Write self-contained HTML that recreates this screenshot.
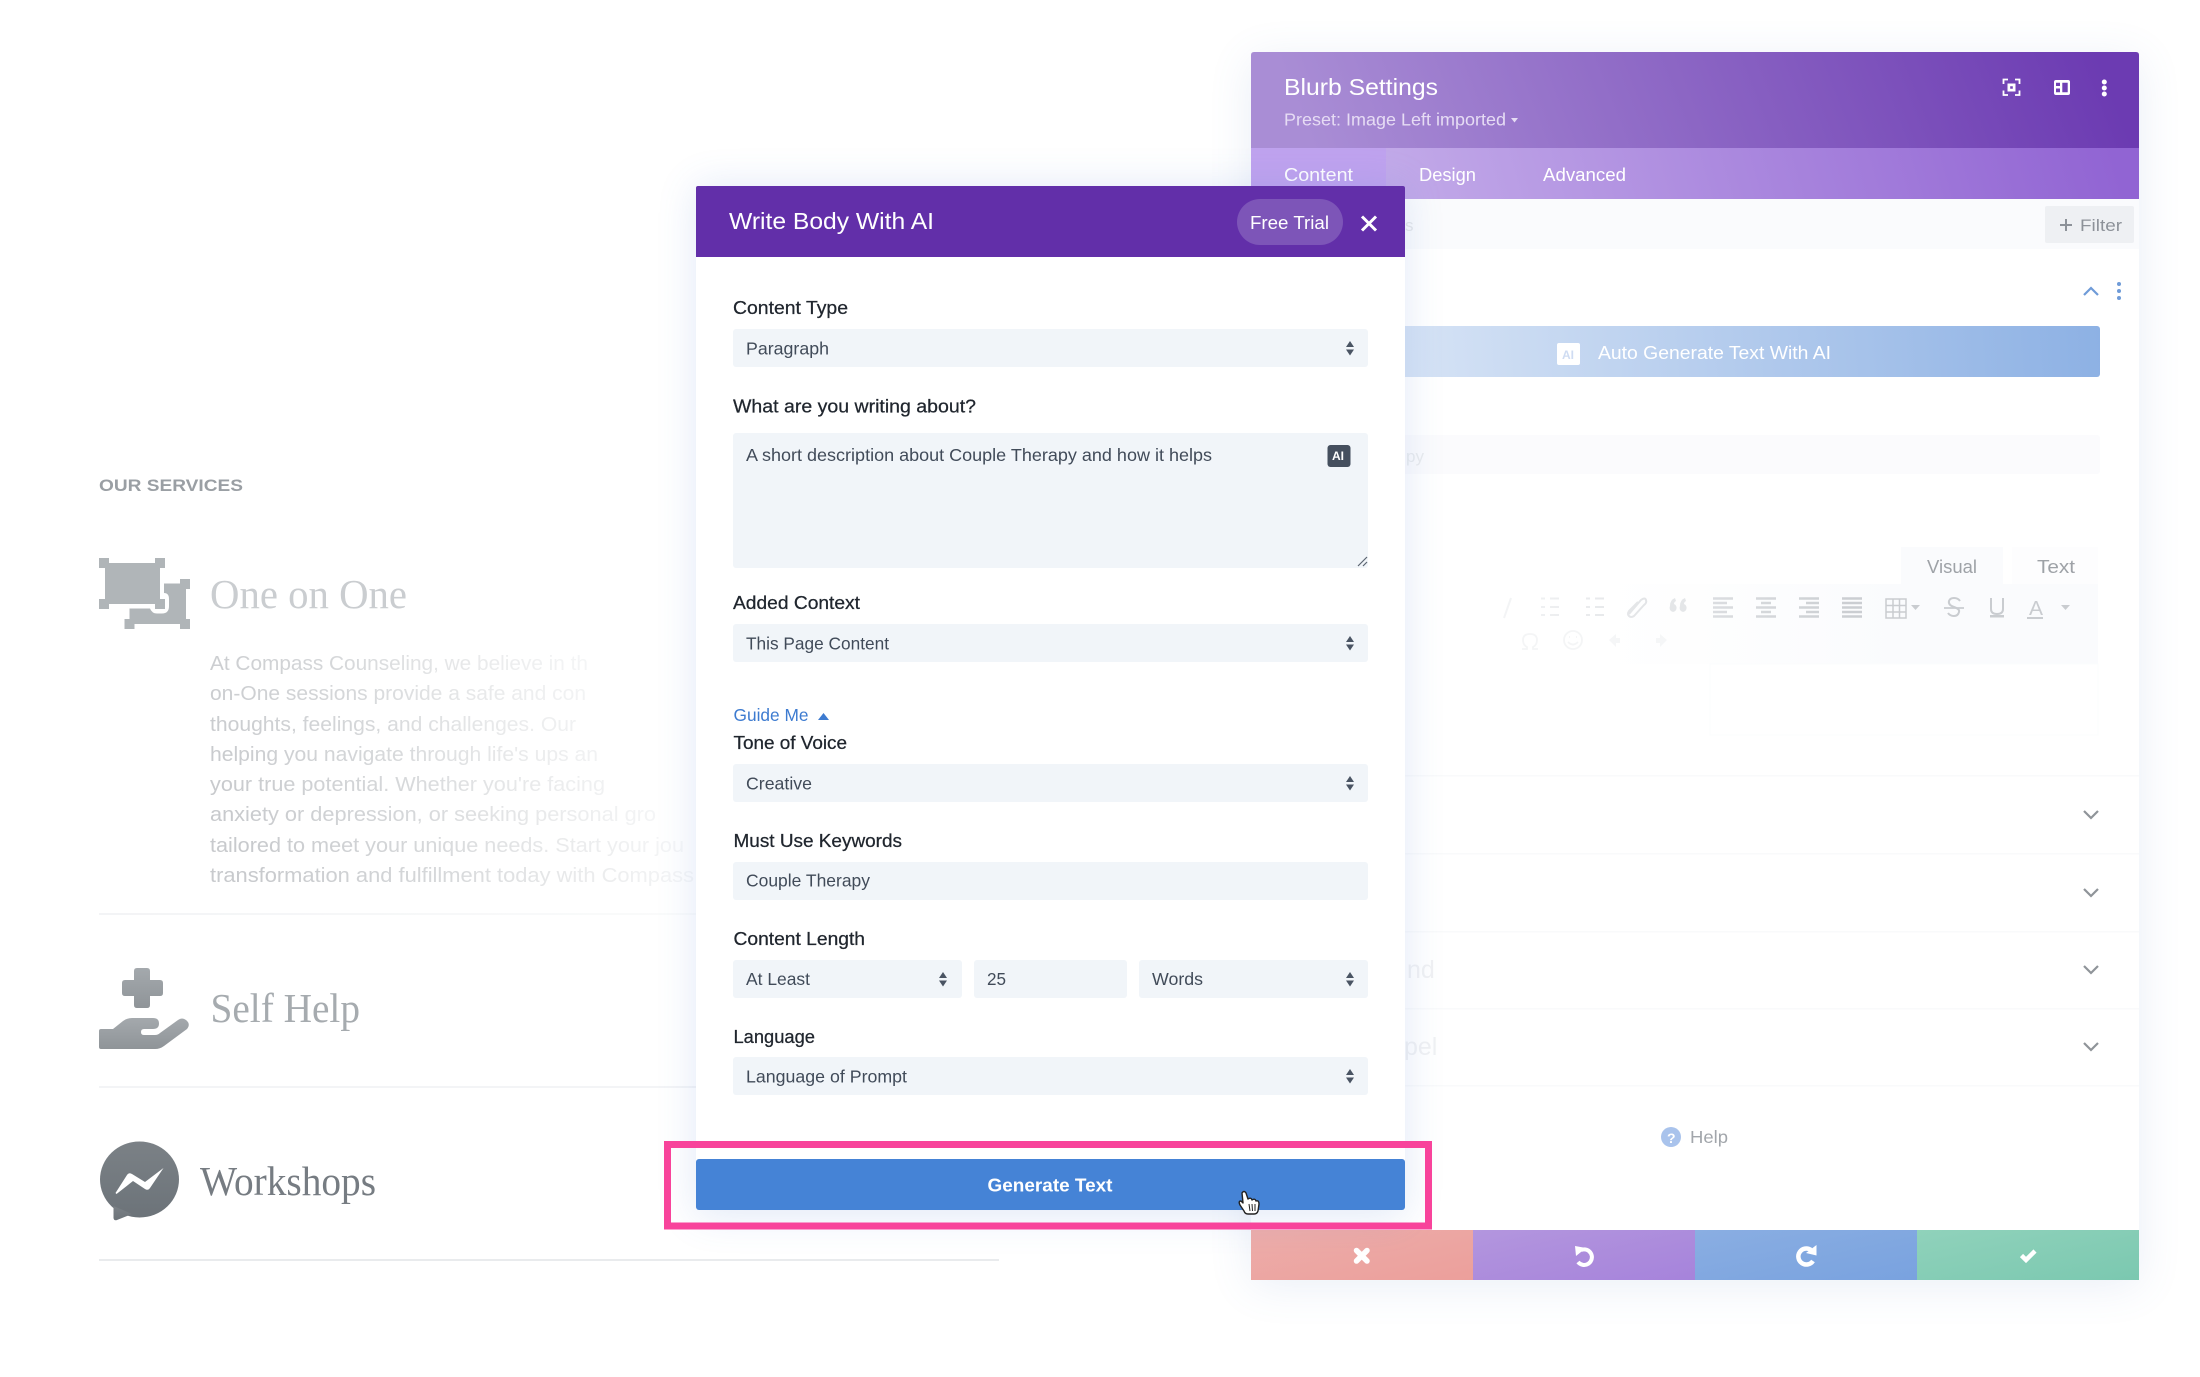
<!DOCTYPE html>
<html><head><meta charset="utf-8"><title>Blurb Settings</title>
<style>
html,body{margin:0;padding:0;background:#fff;width:2200px;height:1377px;overflow:hidden}
svg{display:block}
text{font-family:"Liberation Sans",sans-serif}
.s{font-family:"Liberation Serif",serif}
.l{font-size:18.5px;fill:#20262e;stroke:#20262e;stroke-width:.25}
.f{font-size:17.5px;fill:#414b59}
.t{font-size:18.5px;fill:#fff}
.p{font-size:20.5px;fill:url(#fade)}
</style></head><body>
<svg width="2200" height="1377" viewBox="0 0 2200 1377" xmlns="http://www.w3.org/2000/svg">
<defs>
<filter id="b1" filterUnits="userSpaceOnUse" x="1100" y="-100" width="1100" height="1477"><feGaussianBlur stdDeviation="22"/></filter>
<filter id="b2" filterUnits="userSpaceOnUse" x="560" y="60" width="980" height="1300"><feGaussianBlur stdDeviation="20"/></filter>
<linearGradient id="fade" gradientUnits="userSpaceOnUse" x1="210" y1="770" x2="640" y2="570"><stop offset="0" stop-color="#c8cacd"/><stop offset=".35" stop-color="#d6d8da"/><stop offset=".6" stop-color="#e9eaeb"/><stop offset=".85" stop-color="#f6f7f8"/><stop offset="1" stop-color="#fff"/></linearGradient>
<linearGradient id="hd" gradientUnits="userSpaceOnUse" x1="1350" y1="240" x2="2060" y2="-40"><stop offset="0" stop-color="#a98dd5"/><stop offset="1" stop-color="#6c3bb2"/></linearGradient>
<linearGradient id="tb" gradientUnits="userSpaceOnUse" x1="1400" y1="270" x2="2090" y2="70"><stop offset="0" stop-color="#c3abe9"/><stop offset="1" stop-color="#9164d3"/></linearGradient>
<linearGradient id="auto" gradientUnits="userSpaceOnUse" x1="1405" y1="377" x2="2100" y2="326"><stop offset="0" stop-color="#d6e3f5"/><stop offset="1" stop-color="#8db1e4"/></linearGradient>
<linearGradient id="tool" gradientUnits="userSpaceOnUse" x1="1600" y1="0" x2="1900" y2="0"><stop offset="0" stop-color="#fbfcfd" stop-opacity="0"/><stop offset="1" stop-color="#fafbfd"/></linearGradient>
<linearGradient id="ticon" gradientUnits="userSpaceOnUse" x1="1480" y1="0" x2="1850" y2="0"><stop offset="0" stop-color="#f6f7f8"/><stop offset="1" stop-color="#cbced2"/></linearGradient>
<linearGradient id="line" gradientUnits="userSpaceOnUse" x1="99" y1="0" x2="700" y2="0"><stop offset="0" stop-color="#f3f4f6"/><stop offset="1" stop-color="#fafbfb"/></linearGradient>
<linearGradient id="g1" x1="0" y1="0" x2="0" y2="1"><stop offset="0" stop-color="#a4a9ad"/><stop offset="1" stop-color="#8f9498"/></linearGradient>
<linearGradient id="g2" x1="0" y1="0" x2="0" y2="1"><stop offset="0" stop-color="#7b8186"/><stop offset="1" stop-color="#6c7379"/></linearGradient>
<linearGradient id="br" x1="0" y1="0" x2="1" y2="1"><stop offset="0" stop-color="#edadaa"/><stop offset="1" stop-color="#ec9f9b"/></linearGradient>
<linearGradient id="bp" x1="0" y1="0" x2="1" y2="1"><stop offset="0" stop-color="#b396de"/><stop offset="1" stop-color="#a683db"/></linearGradient>
<linearGradient id="bb" x1="0" y1="0" x2="1" y2="1"><stop offset="0" stop-color="#8aaee2"/><stop offset="1" stop-color="#79a2df"/></linearGradient>
<linearGradient id="bg" x1="0" y1="0" x2="1" y2="1"><stop offset="0" stop-color="#90d2bb"/><stop offset="1" stop-color="#7bc8b0"/></linearGradient>
</defs>

<!-- page behind -->
<text x="99" y="491" font-size="17" font-weight="bold" fill="#9a9fa4" textLength="144" lengthAdjust="spacingAndGlyphs">OUR SERVICES</text>
<g fill="#b0b5b8">
<rect x="105" y="563" width="55" height="41"/>
<rect x="99" y="558" width="10" height="10"/><rect x="155" y="558" width="10" height="10"/>
<rect x="99" y="599" width="10" height="10"/><rect x="155" y="599" width="10" height="10"/>
<path d="M164 583.500H186V624H129.500V608.500H150Q152 613.500 157 613.500H162Q169 613.500 169 606V599Q169 593 164 593Z"/>
<rect x="124.500" y="619" width="10" height="10"/><rect x="180" y="619" width="10" height="10"/><rect x="180" y="579" width="10" height="10"/>
</g>
<text class="s" x="210" y="608" font-size="41" fill="#cacdd0" textLength="197" lengthAdjust="spacingAndGlyphs">One on One</text>
<text class="p" x="210" y="670" textLength="378" lengthAdjust="spacingAndGlyphs">At Compass Counseling, we believe in th</text>
<text class="p" x="210" y="700" textLength="376" lengthAdjust="spacingAndGlyphs">on-One sessions provide a safe and con</text>
<text class="p" x="210" y="731" textLength="366" lengthAdjust="spacingAndGlyphs">thoughts, feelings, and challenges. Our</text>
<text class="p" x="210" y="761" textLength="388" lengthAdjust="spacingAndGlyphs">helping you navigate through life's ups an</text>
<text class="p" x="210" y="791" textLength="395" lengthAdjust="spacingAndGlyphs">your true potential. Whether you're facing</text>
<text class="p" x="210" y="821" textLength="446" lengthAdjust="spacingAndGlyphs">anxiety or depression, or seeking personal gro</text>
<text class="p" x="210" y="852" textLength="474" lengthAdjust="spacingAndGlyphs">tailored to meet your unique needs. Start your jou</text>
<text class="p" x="210" y="882" textLength="484" lengthAdjust="spacingAndGlyphs">transformation and fulfillment today with Compass</text>
<rect x="99" y="913" width="600" height="2" fill="url(#line)"/>
<g fill="url(#g1)">
<path d="M134 971Q134 968 137 968H147Q150 968 150 971V980H160Q163 980 163 983V993Q163 996 160 996H150V1005Q150 1008 147 1008H137Q134 1008 134 1005V996H125Q122 996 122 993V983Q122 980 125 980H134Z"/>
<path d="M99 1031Q99 1029 101 1029H113L123 1021Q127 1018 132 1018H153Q159 1018 159 1023.5Q159 1029 153 1029H144Q141 1029 141 1032Q141 1035 144 1035H155Q158 1035 160 1033L178 1020Q182 1017 186 1020Q191 1024 187 1029L164 1046Q160 1049 155 1049H101Q99 1049 99 1047Z"/>
</g>
<text class="s" x="210.500" y="1022" font-size="41" fill="#a6abaf" textLength="149.500" lengthAdjust="spacingAndGlyphs">Self Help</text>
<rect x="99" y="1086" width="600" height="2" fill="#f3f4f6"/>
<g fill="url(#g2)">
<ellipse cx="139.500" cy="1179.500" rx="39.500" ry="38"/>
<path d="M113.500 1206V1218Q114 1221 117 1220L132 1214Z"/>
</g>
<path d="M115.500 1193L127 1175Q129 1172 132 1174L145 1182L163.500 1168L150 1188Q148 1191 145 1189L133 1181L116.500 1194Z" fill="#fff"/>
<text class="s" x="200" y="1195" font-size="41" fill="#767c82" textLength="176" lengthAdjust="spacingAndGlyphs">Workshops</text>
<rect x="99" y="1259" width="900" height="2" fill="#e9ebed"/>

<!-- settings panel -->
<rect x="1251" y="60" width="888" height="1225" fill="#5c7fc0" opacity=".13" filter="url(#b1)"/>
<rect x="1251" y="52" width="888" height="1228" fill="#fff" rx="3"/>
<path d="M1251 148V55Q1251 52 1254 52H2136Q2139 52 2139 55V148Z" fill="url(#hd)"/>
<rect x="1251" y="148" width="888" height="51" fill="url(#tb)"/>
<rect x="1251" y="148" width="135" height="51" fill="#bfa2ee"/>
<rect x="1251" y="199" width="888" height="50" fill="#fafbfd"/>
<text x="1284" y="95" font-size="23" fill="#fff" textLength="154" lengthAdjust="spacingAndGlyphs">Blurb Settings</text>
<text x="1284" y="125.500" font-size="17.500" fill="#e6dcf4" textLength="222" lengthAdjust="spacingAndGlyphs">Preset: Image Left imported</text>
<path d="M1511 118h7l-3.500 4.500z" fill="#e6dcf4"/>
<path d="M2003.500 84V79.500H2008M2015 79.500H2019.500V84M2019.500 90.500V95H2015M2008 95H2003.500V90.500" fill="none" stroke="#fff" stroke-width="1.800"/>
<path fill-rule="evenodd" d="M2007.500 83.500H2015.500V91.500H2007.500ZM2010.200 86.200V88.800H2012.800V86.200Z" fill="#fff"/>
<path fill-rule="evenodd" d="M2056 80H2068Q2070 80 2070 82V93Q2070 95 2068 95H2056Q2054 95 2054 93V82Q2054 80 2056 80ZM2056 82.700V86H2060V82.700ZM2056 88.500V92.300H2060V88.500ZM2062.300 82.700V92.300H2067.700V82.700Z" fill="#fff"/>
<g fill="#fff"><circle cx="2104.300" cy="82" r="2.500"/><circle cx="2104.300" cy="88" r="2.500"/><circle cx="2104.300" cy="94" r="2.500"/></g>
<text class="t" x="1284" y="181" textLength="69" lengthAdjust="spacingAndGlyphs">Content</text>
<text class="t" x="1419" y="181" textLength="57" lengthAdjust="spacingAndGlyphs">Design</text>
<text class="t" x="1543" y="181" textLength="83" lengthAdjust="spacingAndGlyphs">Advanced</text>
<rect x="2045" y="206" width="89" height="37" rx="2" fill="#eef0f3"/>
<path d="M2060 225h12M2066 219v12" stroke="#8d9299" stroke-width="2"/>
<text x="2080" y="231" font-size="17" fill="#8d9299" textLength="42" lengthAdjust="spacingAndGlyphs">Filter</text>
<text x="1405" y="231" font-size="17" fill="#e4e6e9">s</text>
<path d="M2084 295l7-7 7 7" fill="none" stroke="#6f9bd8" stroke-width="2.200"/>
<g fill="#6f9bd8"><circle cx="2119" cy="284" r="2"/><circle cx="2119" cy="291" r="2"/><circle cx="2119" cy="298" r="2"/></g>
<rect x="1380" y="326" width="720" height="51" rx="3" fill="url(#auto)"/>
<rect x="1557" y="343" width="23" height="22" rx="2" fill="#fff"/>
<text x="1562" y="359" font-size="12" font-weight="bold" fill="#cfdcf2">AI</text>
<text x="1598" y="359" font-size="18.500" fill="#fff" textLength="233" lengthAdjust="spacingAndGlyphs">Auto Generate Text With AI</text>
<rect x="1380" y="435" width="720" height="39" rx="3" fill="#fbfbfd"/>
<text x="1406" y="462" font-size="17" fill="#e9ebed">py</text>

<rect x="1901" y="547" width="102" height="37" fill="#fafbfd"/>
<rect x="2012" y="547" width="86" height="37" fill="#fdfdfe"/>
<text x="1927" y="573" font-size="18.500" fill="#9ea2a7" textLength="50" lengthAdjust="spacingAndGlyphs">Visual</text>
<text x="2037" y="573" font-size="18.500" fill="#9ea2a7" textLength="38" lengthAdjust="spacingAndGlyphs">Text</text>
<rect x="1600" y="584" width="498" height="80" fill="url(#tool)"/>
<rect x="1710" y="664" width="388" height="71" fill="none" stroke="#fbfcfd" stroke-width="1"/>
<g stroke="url(#ticon)" fill="none" stroke-width="2">
<path d="M1511 598L1504 618"/>
<path d="M1541 598.500h4M1550 598.500h9M1541 607h4M1550 607h9M1541 615h4M1550 615h9"/>
<path d="M1586 598.500h4M1595 598.500h9M1586 607h4M1595 607h9M1586 615h4M1595 615h9"/>
<path d="M1629 614l12-14q4-3 5 0t-2 5l-10 11q-3 2-5 0t0-5l9-9"/>
<path d="M1713 598.500h20M1713 603h14M1713 607.500h20M1713 612h14M1713 616.500h20" stroke-width="2.400"/>
<path d="M1756 598.500h20M1761 603h10M1756 607.500h20M1761 612h10M1756 616.500h20" stroke-width="2.400"/>
<path d="M1799 598.500h20M1806 603h13M1799 607.500h20M1806 612h13M1799 616.500h20" stroke-width="2.400"/>
<path d="M1842 598.500h20M1842 603h20M1842 607.500h20M1842 612h20M1842 616.500h20" stroke-width="2.400"/>
</g>
<path d="M1670 606q0-6 5-8l1 3q-2 1-2 3a3.500 4 0 1 1-4 2zM1680 606q0-6 5-8l1 3q-2 1-2 3a3.500 4 0 1 1-4 2z" fill="#e4e6e8"/>
<g fill="none" stroke="#c9ccd0" stroke-width="1.500">
<path d="M1886 599h20v19h-20zM1893 599v19M1899.500 599v19M1886 605.500h20M1886 612h20"/>
<path d="M1944 608h20" stroke-width="1.800"/>
<path d="M1960 601q-2-3-6-3t-5 3q-1 4 5 6t5 5q-1 4-5 4t-6-3" stroke-width="2"/>
<path d="M1991 598v11q0 5 6 5t6-5v-11" stroke-width="2"/>
</g>
<rect x="1990" y="615" width="14" height="2.500" fill="#c9ccd0"/>
<path d="M1911 605h9l-4.500 5z" fill="#c9ccd0"/>
<text x="2029" y="615" font-size="20" fill="#c9ccd0" textLength="14" lengthAdjust="spacingAndGlyphs">A</text>
<rect x="2027" y="617" width="16" height="2" fill="#c9ccd0"/>
<path d="M2061 605h9l-4.500 5z" fill="#c9ccd0"/>
<g fill="none" stroke="#f4f5f6" stroke-width="1.800">
<circle cx="1573" cy="640" r="9"/><path d="M1568 642q5 5 10 0M1569 637h1M1576 637h1"/>
<path d="M1522 649h5v-2q-4-2-4-7 0-6 7-6t7 6q0 5-4 7v2h5"/>
</g>
<path d="M1609 640l7-6v4h4v5h-4v4zM1667 640l-7-6v4h-4v5h4v4z" fill="#f5f6f7"/>
<g fill="#f9fafb">
<rect x="1289" y="775" width="850" height="1.500"/><rect x="1289" y="853" width="850" height="1.500"/><rect x="1289" y="931" width="850" height="1.500"/><rect x="1289" y="1008" width="850" height="1.500"/><rect x="1289" y="1085" width="850" height="1.500"/>
</g>
<g fill="none" stroke="#8f9499" stroke-width="2.200">
<path d="M2084 811l7 7 7-7M2084 889l7 7 7-7M2084 966l7 7 7-7M2084 1043l7 7 7-7"/>
</g>
<text x="1407" y="978" font-size="25" fill="#f0f1f3">nd</text>
<text x="1404" y="1055" font-size="25" fill="#f0f1f3">pel</text>
<circle cx="1671" cy="1137" r="10" fill="#a9c3ec"/>
<text x="1667" y="1143" font-size="14" font-weight="bold" fill="#fff">?</text>
<text x="1690" y="1143" font-size="17.500" fill="#a2a6ab" textLength="38" lengthAdjust="spacingAndGlyphs">Help</text>

<rect x="1251" y="1230" width="222" height="50" fill="url(#br)"/>
<rect x="1473" y="1230" width="222" height="50" fill="url(#bp)"/>
<rect x="1695" y="1230" width="222" height="50" fill="url(#bb)"/>
<rect x="1917" y="1230" width="222" height="50" fill="url(#bg)"/>
<path d="M1356.500 1250.500l10.500 10.500M1367 1250.500l-10.500 10.500" stroke="#fff" stroke-width="5.500" stroke-linecap="round" fill="none"/>
<path d="M1581 1250A7.800 7.800 0 1 1 1578 1262" stroke="#fff" stroke-width="4" fill="none"/>
<path d="M1575 1246L1576 1256L1586 1248Z" fill="#fff"/>
<path d="M1811 1250A8 8 0 1 0 1813 1261" stroke="#fff" stroke-width="4.500" fill="none"/>
<path d="M1816.500 1245V1255.500L1806 1253Z" fill="#fff"/>
<path d="M2021.500 1255.500l4.500 4.500l9-9" stroke="#fff" stroke-width="4.500" fill="none"/>

<!-- modal -->
<rect x="696" y="186" width="709" height="1030" fill="#4f7dd0" opacity=".17" filter="url(#b2)"/>
<rect x="696" y="186" width="709" height="1024" fill="#fff" rx="2"/>
<path d="M696 257V188Q696 186 698 186H1403Q1405 186 1405 188V257Z" fill="#622fa9"/>
<text x="729" y="229" font-size="23" fill="#fff" textLength="205" lengthAdjust="spacingAndGlyphs">Write Body With AI</text>
<rect x="1237" y="199" width="106" height="46" rx="23" fill="#7d55b8"/>
<text class="t" x="1250" y="229" textLength="79" lengthAdjust="spacingAndGlyphs">Free Trial</text>
<path d="M1362 216.500l14 14M1376 216.500l-14 14" stroke="#fff" stroke-width="3"/>

<g fill="#f1f5f9">
<rect x="733" y="329" width="635" height="38" rx="3"/>
<rect x="733" y="433" width="635" height="135" rx="3"/>
<rect x="733" y="624" width="635" height="38" rx="3"/>
<rect x="733" y="764" width="635" height="38" rx="3"/>
<rect x="733" y="862" width="635" height="38" rx="3"/>
<rect x="733" y="960" width="229" height="38" rx="3"/>
<rect x="974" y="960" width="153" height="38" rx="3"/>
<rect x="1139" y="960" width="229" height="38" rx="3"/>
<rect x="733" y="1057" width="635" height="38" rx="3"/>
</g>
<text class="l" x="733" y="314" textLength="115" lengthAdjust="spacingAndGlyphs">Content Type</text>
<text class="f" x="746" y="354.500" textLength="83" lengthAdjust="spacingAndGlyphs">Paragraph</text>
<text class="l" x="733" y="412.500" textLength="243" lengthAdjust="spacingAndGlyphs">What are you writing about?</text>
<text class="f" x="746" y="461" textLength="466" lengthAdjust="spacingAndGlyphs">A short description about Couple Therapy and how it helps</text>
<rect x="1327.500" y="445" width="23" height="22" rx="3" fill="#454f5e"/>
<text x="1332" y="460" font-size="12" font-weight="bold" fill="#fff">AI</text>
<path d="M1358 566l9-9M1363 566l4-4" stroke="#5b6470" stroke-width="1.200"/>
<text class="l" x="733" y="609" textLength="127" lengthAdjust="spacingAndGlyphs">Added Context</text>
<text class="f" x="746" y="649.500" textLength="143" lengthAdjust="spacingAndGlyphs">This Page Content</text>
<text x="733.500" y="721" font-size="17.500" fill="#3d7bd0" textLength="75" lengthAdjust="spacingAndGlyphs">Guide Me</text>
<path d="M818 720l5.500-7 5.500 7z" fill="#3d7bd0"/>
<text class="l" x="733.500" y="749" textLength="113.500" lengthAdjust="spacingAndGlyphs">Tone of Voice</text>
<text class="f" x="746" y="789.500" textLength="66" lengthAdjust="spacingAndGlyphs">Creative</text>
<text class="l" x="733.500" y="847" textLength="168.500" lengthAdjust="spacingAndGlyphs">Must Use Keywords</text>
<text class="f" x="746" y="886.500" textLength="124" lengthAdjust="spacingAndGlyphs">Couple Therapy</text>
<text class="l" x="733.500" y="945" textLength="131.500" lengthAdjust="spacingAndGlyphs">Content Length</text>
<text class="f" x="746" y="985" textLength="64" lengthAdjust="spacingAndGlyphs">At Least</text>
<text class="f" x="987" y="985" textLength="19" lengthAdjust="spacingAndGlyphs">25</text>
<text class="f" x="1152" y="985" textLength="51" lengthAdjust="spacingAndGlyphs">Words</text>
<text class="l" x="733.500" y="1043" textLength="81.500" lengthAdjust="spacingAndGlyphs">Language</text>
<text class="f" x="746" y="1082.500" textLength="161" lengthAdjust="spacingAndGlyphs">Language of Prompt</text>
<g fill="#4a5463">
<path d="M1346 347l4-6 4 6zM1346 349.500l4 6 4-6z"/>
<path d="M1346 642l4-6 4 6zM1346 644.500l4 6 4-6z"/>
<path d="M1346 782l4-6 4 6zM1346 784.500l4 6 4-6z"/>
<path d="M1346 978l4-6 4 6zM1346 980.500l4 6 4-6z"/>
<path d="M939 978l4-6 4 6zM939 980.500l4 6 4-6z"/>
<path d="M1346 1075l4-6 4 6zM1346 1077.500l4 6 4-6z"/>
</g>

<rect x="696" y="1159" width="709" height="51" rx="3" fill="#4583d6"/>
<text x="987.500" y="1191.500" font-size="18.500" font-weight="bold" fill="#fff" textLength="125" lengthAdjust="spacingAndGlyphs">Generate Text</text>
<path d="M1242 1193Q1244 1190 1246 1193L1248 1199Q1251 1197 1252 1200Q1255 1198 1256 1201Q1259 1200 1259 1204L1258 1211Q1257 1214 1254 1214H1248Q1245 1214 1244 1211L1240 1205Q1238 1201 1241 1201L1243 1203Z" fill="#fff" stroke="#222" stroke-width="1.400" stroke-linejoin="round"/>
<path d="M1249 1204l1 7M1252 1204l.5 7M1255 1204v7" stroke="#222" stroke-width="1" fill="none"/>
<rect x="667.500" y="1144.500" width="761" height="81.500" fill="none" stroke="#f8439b" stroke-width="7"/>
</svg>
</body></html>
